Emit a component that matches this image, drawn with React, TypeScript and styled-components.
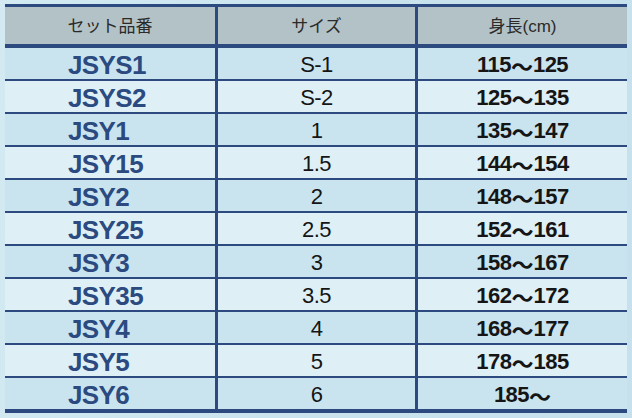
import React from "react";
import styled, { createGlobalStyle } from "styled-components";

const Global = createGlobalStyle`
  html, body {
    margin: 0;
    padding: 0;
  }
  body {
    width: 632px;
    height: 418px;
    overflow: hidden;
    background: linear-gradient(100deg, #d3eaf2 0%, #c8e2ee 60%, #c6e1ed 100%);
    font-family: "Liberation Sans", "Noto Sans CJK JP", sans-serif;
  }
`;

const line = "#2c4a7f";
const cols = "210px 200px 212px";

const S = {
  Table: styled.div`
    width: 622px;
    margin: 4px 0 0 5px;
    border-top: 3px solid ${line};
    border-bottom: 4px solid ${line};
  `,
  Head: styled.div`
    display: grid;
    grid-template-columns: ${cols};
    height: 37px;
    background: #b3c2c6;
    border-bottom: 4px solid ${line};
  `,
  HeadCell: styled.div<{ $first?: boolean }>`
    display: flex;
    align-items: center;
    justify-content: center;
    border-left: ${(p) => (p.$first ? "none" : `3px solid ${line}`)};
    font-family: "Liberation Sans", "Noto Sans CJK JP", sans-serif;
    font-size: 17px;
    line-height: 1;
    color: #2a2a2a;
    padding-top: 2px;
  `,
  Row: styled.div<{ $alt: boolean; $first: boolean }>`
    display: grid;
    grid-template-columns: ${cols};
    height: 31px;
    background: ${(p) => (p.$alt ? "#def0f6" : "#c9e4ef")};
    border-top: ${(p) => (p.$first ? "none" : `2px solid ${line}`)};
  `,
  Cell: styled.div<{ $first?: boolean }>`
    display: flex;
    align-items: center;
    justify-content: ${(p) => (p.$first ? "flex-start" : "center")};
    padding: 3px 0 0 ${(p) => (p.$first ? "63px" : "0")};
    line-height: 1;
    border-left: ${(p) => (p.$first ? "none" : `3px solid ${line}`)};
  `,
  Code: styled.span`
    font-size: 26px;
    font-weight: bold;
    letter-spacing: -0.6px;
    color: #2b4a7f;
  `,
  Size: styled.span`
    font-size: 22px;
    letter-spacing: -0.6px;
    color: #151515;
  `,
  Height: styled.span`
    display: flex;
    align-items: center;
    font-size: 22px;
    font-weight: bold;
    letter-spacing: -0.5px;
    color: #151515;
  `,
  Wave: styled.span`
    font-family: "Noto Sans CJK JP", sans-serif;
    letter-spacing: 0;
    line-height: 1;
    margin-top: -1px;
  `,
};

const rows: [string, string, string, string][] = [
  ["JSYS1", "S-1", "115", "125"],
  ["JSYS2", "S-2", "125", "135"],
  ["JSY1", "1", "135", "147"],
  ["JSY15", "1.5", "144", "154"],
  ["JSY2", "2", "148", "157"],
  ["JSY25", "2.5", "152", "161"],
  ["JSY3", "3", "158", "167"],
  ["JSY35", "3.5", "162", "172"],
  ["JSY4", "4", "168", "177"],
  ["JSY5", "5", "178", "185"],
  ["JSY6", "6", "185", ""],
];

const App = () => (
  <>
    <Global />
    <S.Table>
      <S.Head>
        <S.HeadCell $first>セット品番</S.HeadCell>
        <S.HeadCell>サイズ</S.HeadCell>
        <S.HeadCell>身長(cm)</S.HeadCell>
      </S.Head>
      {rows.map(([code, size, from, to], i) => (
        <S.Row key={code} $alt={i % 2 === 1} $first={i === 0}>
          <S.Cell $first>
            <S.Code>{code}</S.Code>
          </S.Cell>
          <S.Cell>
            <S.Size>{size}</S.Size>
          </S.Cell>
          <S.Cell>
            <S.Height>
              <span>{from}</span>
              <S.Wave>〜</S.Wave>
              {to && <span>{to}</span>}
            </S.Height>
          </S.Cell>
        </S.Row>
      ))}
    </S.Table>
  </>
);

export default App;
